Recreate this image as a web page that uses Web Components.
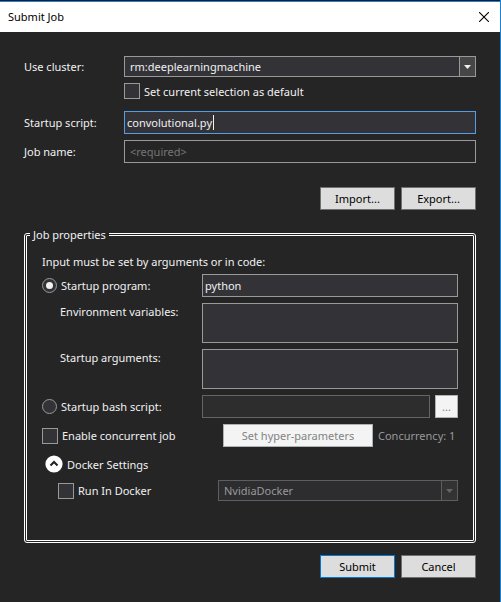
<!DOCTYPE html>
<html lang="en">
<head>
<meta charset="utf-8">
<title>Submit Job</title>
<style>
  body { margin: 0; background: #252526; }
</style>
</head>
<body>
<submit-dialog></submit-dialog>

<script>
const base = `
  *, *::before, *::after { box-sizing: border-box; }
  input, textarea, select, button { font: inherit; margin: 0; border-radius: 0; outline: 0; }
`;

class Base extends HTMLElement {
  connectedCallback() {
    if (this.shadowRoot) return;
    const t = document.createElement('template');
    t.innerHTML = `<style>${base}</style>` + this.render();
    this.attachShadow({ mode: 'open' }).append(t.content.cloneNode(true));
  }
  attr(name, fallback = '') { return this.getAttribute(name) ?? fallback; }
  flag(name) { return this.hasAttribute(name) ? name : ''; }
}

customElements.define('push-button', class extends Base {
  render() {
    return `<style>
      :host { display: block; flex: none; width: 75px; height: 23px; }
      :host([size="wide"]) { width: 150px; }
      :host([size="small"]) { width: 23px; }
      button { display: block; width: 100%; height: 100%; padding: 0; border: 1px solid #707070;
        background: #dddddd; color: #000; line-height: 17px; text-align: center; }
      :host([primary]) button { border-color: #0078d7; }
      button:disabled { background: #f4f4f4; border-color: #adb2b5; color: #838383; }
    </style><button type="button" ${this.flag('disabled')}><slot></slot></button>`;
  }
});

customElements.define('text-field', class extends Base {
  render() {
    const area = this.hasAttribute('multiline');
    const name = this.hasAttribute('label')
      ? `<label for="f">${this.attr('label')}</label>` : '<slot name="label"></slot>';
    const aria = this.hasAttribute('label') ? '' : `aria-label="${this.attr('name')}"`;
    const field = area
      ? `<textarea id="f"></textarea>`
      : `<input id="f" type="text" ${aria} value="${this.attr('value')}" placeholder="${this.attr('placeholder')}" ${this.flag('disabled')}>`;
    return `<style>
      :host { display: grid; grid-template-columns: var(--label-width, 100px) minmax(0, 1fr); align-items: center; line-height: 17px; }
      :host([multiline]) { align-items: start; }
      :host([indent]) label { padding-left: 18px; }
      .box { position: relative; display: grid; }
      input, textarea { display: block; width: 100%; height: 23px; padding: 0 2px; resize: none;
        border: 1px solid #999999; background: #333337; color: #f1f1f1; }
      textarea { height: 40px; }
      :host([focused]) input { border-color: #569de5; }
      :host([placeholder]) input { background: #252526; padding: 0 5px; }
      input::placeholder { color: #767676; opacity: 1; }
      input:disabled { background: #2d2d2d; border-color: #646464; }
      .caret { position: absolute; top: 4px; left: 89px; width: 1px; height: 15px; background: #f1f1f1; }
    </style>${name}<div class="box">${field}${this.hasAttribute('focused') ? '<span class="caret"></span>' : ''}</div>`;
  }
});

customElements.define('combo-box', class extends Base {
  render() {
    const label = this.hasAttribute('label') ? `<label for="s">${this.attr('label')}</label>` : '';
    return `<style>
      :host { display: flex; align-items: center; line-height: 17px; }
      label { flex: none; width: 100px; }
      .box { flex: 1; min-width: 0; display: grid; grid-template-columns: minmax(0, 1fr) 17px; height: 21px; }
      select { grid-area: 1 / 1 / 2 / 3; width: 100%; height: 21px; padding: 0 22px 0 5px; appearance: none;
        border: 1px solid #999999; background: #333337; color: #f1f1f1; opacity: 1; }
      .arrow { grid-area: 1 / 2; display: grid; place-items: center; pointer-events: none;
        border: 1px solid #999999; background: #464647; color: #f1f1f1; }
      :host([disabled]) select { background: #2d2d30; border-color: #5e5e5e; color: #999999; }
      :host([disabled]) .arrow { background: #333334; border-color: #5e5e5e; color: #656565; }
      svg { display: block; }
    </style>${label}<div class="box">
      <select id="s" ${label ? '' : `aria-label="${this.attr('name')}"`} ${this.flag('disabled')}><option>${this.attr('value')}</option></select>
      <span class="arrow"><svg width="7" height="4" viewBox="0 0 7 4"><path d="M0 0h7L3.500 4z" fill="currentColor"/></svg></span>
    </div>`;
  }
});

customElements.define('check-option', class extends Base {
  render() {
    return `<style>
      :host { display: block; line-height: 17px; }
      label { display: flex; align-items: center; gap: 4px; height: 16px; white-space: nowrap; }
      input { flex: none; appearance: none; width: 16px; height: 16px; border: 1px solid #999999; background: #333337; }
      input:checked { background: #f1f1f1; }
    </style><label><input type="checkbox"><slot></slot></label>`;
  }
});

customElements.define('radio-option', class extends Base {
  render() {
    return `<style>
      :host { display: block; line-height: 17px; }
      label { display: flex; align-items: center; gap: 4px; white-space: nowrap; }
      input { flex: none; appearance: none; display: grid; place-items: center; width: 15px; height: 15px;
        border: 1px solid #999999; border-radius: 50%; background: #333337; }
      input:checked::before { content: ""; width: 7px; height: 7px; border-radius: 50%; background: #f1f1f1; }
    </style><label><input type="radio" name="mode" ${this.flag('checked')}><slot></slot></label>`;
  }
});

customElements.define('group-box', class extends Base {
  render() {
    return `<style>
      :host { display: block; }
      fieldset { min-width: 0; margin: 0; padding: 10px 15px 39px; border: 3px double #ffffff; border-radius: 3px; }
      legend { margin-left: -12px; padding: 0 3px; line-height: 17px; }
    </style><fieldset><legend>${this.attr('heading')}</legend><slot></slot></fieldset>`;
  }
});

customElements.define('section-expander', class extends Base {
  render() {
    return `<style>
      :host { display: block; }
      button { display: flex; align-items: center; gap: 4px; height: 18px; padding: 0 0 0 3px; border: 0;
        background: none; color: inherit; line-height: 17px; }
      svg { display: block; flex: none; }
      .content { padding: 7px 0 0 16px; }
    </style><button type="button" aria-expanded="true">
      <svg width="18" height="18" viewBox="0 0 18 18"><circle cx="9" cy="9" r="8.600" fill="#fff"/><path d="M5.500 10.500 9 7l3.500 3.500" fill="none" stroke="#222" stroke-width="2"/></svg>
      <slot name="heading"></slot></button>
    <div class="content"><slot></slot></div>`;
  }
});

customElements.define('title-bar', class extends Base {
  render() {
    return `<style>
      :host { display: flex; align-items: center; justify-content: space-between; height: 32px;
        padding: 0 8px; border-top: 1px solid #1b1b1f; background: #ffffff; color: #000000;
        box-shadow: inset 0 1px #1883d7; }
      h1 { margin: 0; font-size: 11px; font-weight: 400; line-height: 17px; }
      button { display: grid; place-items: center; width: 16px; height: 16px; padding: 0; border: 0; background: none; }
      svg { display: block; }
    </style><h1><slot></slot></h1>
    <button type="button" aria-label="Close"><svg width="10" height="10" viewBox="0 0 10 10"><path d="M0 0 10 10M10 0 0 10" stroke="#000" stroke-width="1.100"/></svg></button>`;
  }
});

customElements.define('submit-dialog', class extends Base {
  render() {
    return `<style>
      :host { display: block; min-height: 100vh; border-right: 1px solid #1883d7; background: #252526; color: #f1f1f1;
        font: 11px/17px "Noto Sans", "Open Sans", sans-serif; }
      main { padding: 24px; }
      .default { margin: 6px 0 12px 100px; }
      .stack { display: grid; gap: 6px; }
      .actions { display: flex; justify-content: flex-end; gap: 6px; }
      .transfer { margin: 24px 0 16px; }
      .submit { margin-top: 12px; }
      p { margin: 0 0 4px; }
      group-box { --label-width: 160px; }
      .browse, .concurrent, .docker { display: flex; align-items: center; }
      .browse { gap: 5px; }
      .browse text-field { flex: 1; }
      .concurrent { justify-content: space-between; margin-bottom: 8px; }
      .run { display: flex; align-items: center; gap: 5px; color: #999999; }
      .run span { min-width: 80px; }
      .docker check-option { width: 160px; }
      .docker combo-box { flex: 1; }
    </style>
    <title-bar>Submit Job</title-bar>
    <main>
      <combo-box label="Use cluster:" value="rm:deeplearningmachine"></combo-box>
      <check-option class="default">Set current selection as default</check-option>
      <div class="stack">
        <text-field label="Startup script:" value="convolutional.py" focused></text-field>
        <text-field label="Job name:" placeholder="&lt;required&gt;"></text-field>
      </div>
      <div class="actions transfer"><push-button>Import...</push-button><push-button>Export...</push-button></div>
      <group-box heading="Job properties">
        <p>Input must be set by arguments or in code:</p>
        <div class="stack">
          <text-field name="Startup program" value="python"><radio-option slot="label" checked>Startup program:</radio-option></text-field>
          <text-field label="Environment variables:" indent multiline></text-field>
          <text-field label="Startup arguments:" indent multiline></text-field>
          <div class="browse">
            <text-field name="Startup bash script" disabled><radio-option slot="label">Startup bash script:</radio-option></text-field>
            <push-button size="small" disabled>...</push-button>
          </div>
          <div class="concurrent">
            <check-option>Enable concurrent job</check-option>
            <div class="run"><push-button size="wide" disabled>Set hyper-parameters</push-button><span>Concurrency: 1</span></div>
          </div>
        </div>
        <section-expander>
          <span slot="heading">Docker Settings</span>
          <div class="docker">
            <check-option>Run In Docker</check-option>
            <combo-box name="Docker engine" value="NvidiaDocker" disabled></combo-box>
          </div>
        </section-expander>
      </group-box>
      <div class="actions submit"><push-button primary>Submit</push-button><push-button>Cancel</push-button></div>
    </main>`;
  }
});
</script>
</body>
</html>
